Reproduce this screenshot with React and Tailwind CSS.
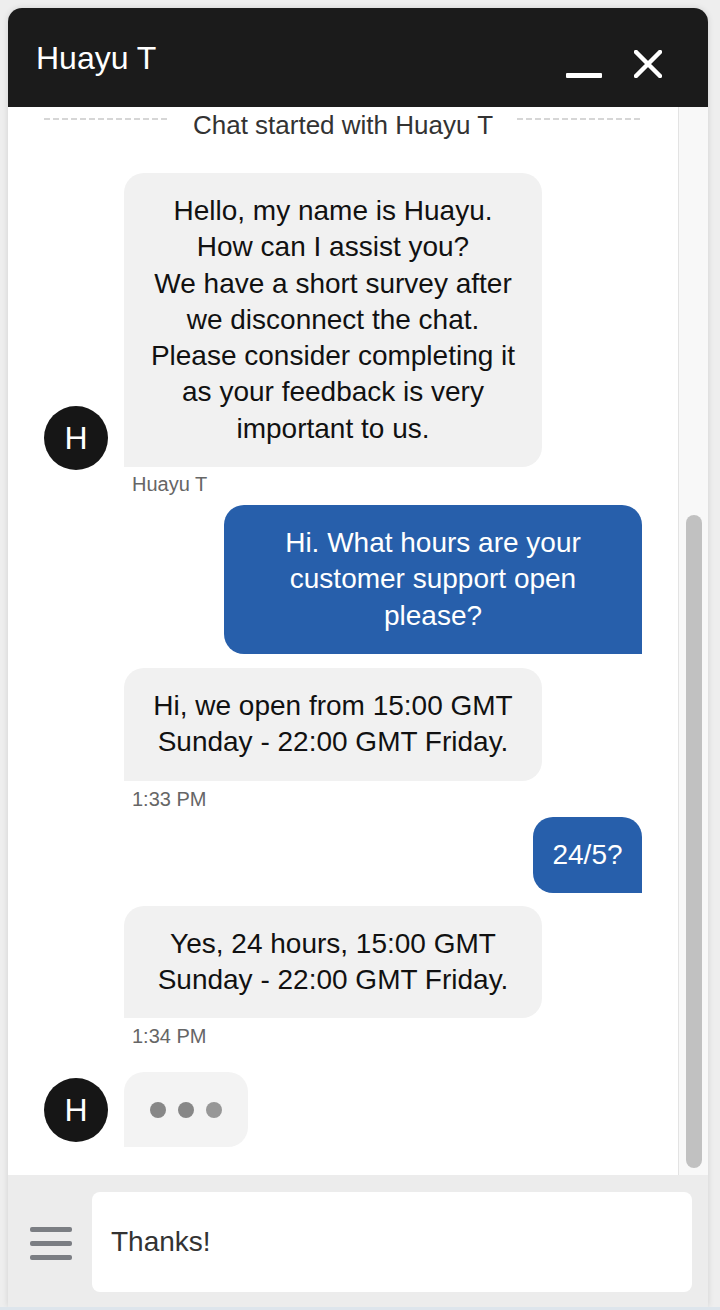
import React from "react";

const font = "font-['Liberation_Sans',Arial,sans-serif]";

const Avatar = () => (
  <div className="w-16 h-16 shrink-0 rounded-full bg-[#161616] text-white flex items-center justify-center text-[32px] leading-none">
    H
  </div>
);

const AgentBubble = ({ lines }) => (
  <div className="w-[418px] bg-[#f1f1f1] rounded-[20px] rounded-bl-none py-5 text-center text-[28px] leading-[36.3px] text-[#111]">
    {lines.map((l) => (
      <div key={l}>{l}</div>
    ))}
  </div>
);

const UserBubble = ({ lines, className = "w-[418px]" }) => (
  <div
    className={`self-end ${className} bg-[#275fab] rounded-[20px] rounded-br-none py-5 text-center text-[28px] leading-[36.3px] text-white`}
  >
    {lines.map((l) => (
      <div key={l}>{l}</div>
    ))}
  </div>
);

const Meta = ({ children, className = "" }) => (
  <div className={`ml-[88px] text-[20px] leading-6 text-[#666] ${className}`}>{children}</div>
);

const Dash = () => (
  <div className="flex-1 mt-[6px] h-[2px] bg-[repeating-linear-gradient(90deg,#d6d6d6_0_6px,transparent_6px_9px)]" />
);

export default function App() {
  return (
    <div className={`w-[720px] h-[1310px] bg-[#eeeeee] pt-2 px-2 flex flex-col ${font}`}>
      <div className="w-[700px] h-[1299px] flex flex-col rounded-t-[14px] overflow-hidden shadow-[0_0_6px_rgba(0,0,0,0.12)]">
        {/* header */}
        <div className="h-[99px] shrink-0 bg-[#1b1b1b] flex items-center pl-[28px] pr-[46px]">
          <div className="text-white text-[32px] leading-none">Huayu T</div>
          <div className="ml-auto flex items-end gap-8 pt-[12px]">
            <div className="w-9 h-[5px] rounded-[1px] bg-white" />
            <svg width="28" height="28" viewBox="0 0 28 28">
              <path d="M2 2L26 26M26 2L2 26" stroke="white" strokeWidth="4.5" strokeLinecap="round" />
            </svg>
          </div>
        </div>

        {/* body */}
        <div className="h-[1068px] shrink-0 flex bg-white">
          <div className="flex-1 flex flex-col px-9 pt-[5px] overflow-hidden">
            <div className="flex items-start gap-6 h-[26px]">
              <Dash />
              <div className="text-[26px] leading-[26px] text-[#333]">Chat started with Huayu T</div>
              <Dash />
            </div>

            <div className="flex items-end gap-4 mt-[35px]">
              <div className="-mb-[3px]">
                <Avatar />
              </div>
              <AgentBubble
                lines={[
                  "Hello, my name is Huayu.",
                  "How can I assist you?",
                  "We have a short survey after",
                  "we disconnect the chat.",
                  "Please consider completing it",
                  "as your feedback is very",
                  "important to us.",
                ]}
              />
            </div>
            <Meta className="mt-[5px]">Huayu T</Meta>

            <div className="mt-[9px] flex flex-col">
              <UserBubble lines={["Hi. What hours are your", "customer support open", "please?"]} />
            </div>

            <div className="mt-[14px] ml-20">
              <AgentBubble lines={["Hi, we open from 15:00 GMT", "Sunday - 22:00 GMT Friday."]} />
            </div>
            <Meta className="mt-[6px]">1:33 PM</Meta>

            <div className="mt-[6px] flex flex-col">
              <UserBubble lines={["24/5?"]} className="w-[109px]" />
            </div>

            <div className="mt-[13px] ml-20">
              <AgentBubble lines={["Yes, 24 hours, 15:00 GMT", "Sunday - 22:00 GMT Friday."]} />
            </div>
            <Meta className="mt-[6px]">1:34 PM</Meta>

            <div className="mt-[24px] flex items-center gap-4">
              <Avatar />
              <div className="h-[75px] bg-[#f3f3f3] rounded-[20px] rounded-bl-none px-[26px] flex items-center gap-3">
                <span className="w-4 h-4 rounded-full bg-[#878787]" />
                <span className="w-4 h-4 rounded-full bg-[#878787]" />
                <span className="w-4 h-4 rounded-full bg-[#979797]" />
              </div>
            </div>
          </div>

          {/* scrollbar */}
          <div className="w-[30px] shrink-0 border-l border-[#e3e3e3] bg-[#f8f8f8] flex flex-col pt-[408px] pb-[7px] pl-[7px] pr-[6px]">
            <div className="flex-1 rounded-full bg-[#c1c1c1]" />
          </div>
        </div>

        {/* footer */}
        <div className="flex-1 bg-[#ececec] flex items-start pt-[17px] pr-4">
          <div className="w-[84px] shrink-0 flex justify-center pl-[1px] pt-[35px]">
            <div className="flex flex-col gap-[9px]">
              <div className="w-[42px] h-[5px] rounded-[2px] bg-[#7b7e83]" />
              <div className="w-[42px] h-[5px] rounded-[2px] bg-[#7b7e83]" />
              <div className="w-[42px] h-[5px] rounded-[2px] bg-[#7b7e83]" />
            </div>
          </div>
          <div className="flex-1 h-[100px] bg-white rounded-lg flex items-center pl-[19px] text-[28px] text-[#333]">
            Thanks!
          </div>
        </div>
      </div>
      <div className="-mx-2 flex-1 bg-[#dde5ec]" />
    </div>
  );
}
